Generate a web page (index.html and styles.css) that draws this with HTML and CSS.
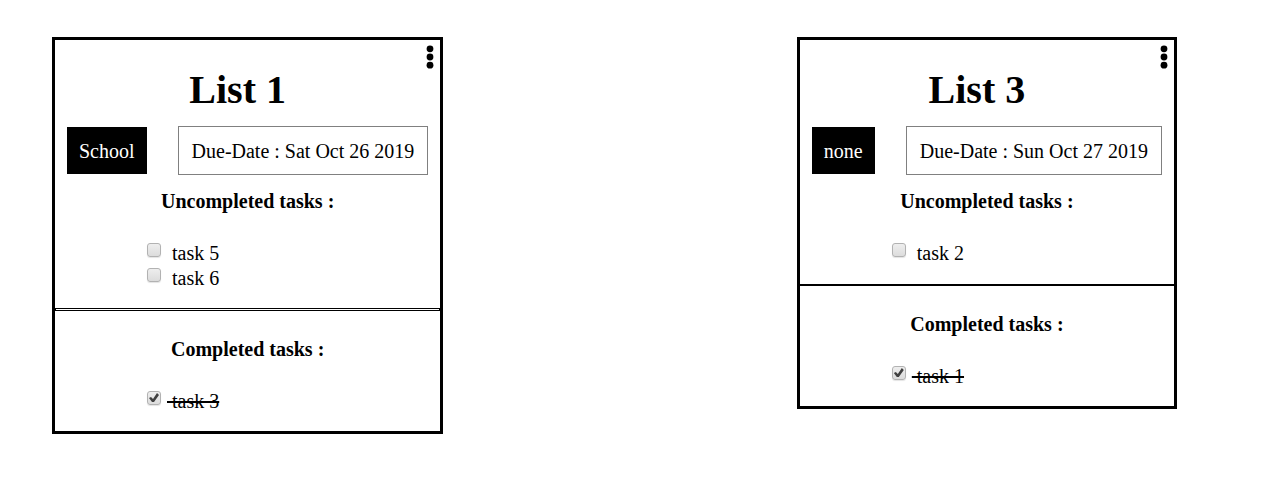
FILE: index.html
```html
<!DOCTYPE html>
<html lang="en">
<head>
<meta charset="utf-8">
<meta name="viewport" content="width=device-width, initial-scale=1">
<title>Lists</title>
<link rel="stylesheet" href="styles.css">
</head>
<body>
<main class="board">
  <article class="card">
    <header class="card-header">
      <h1 class="card-title">List 1</h1>
      <button class="menu" type="button" aria-label="List 1 options">
        <svg class="menu-icon" viewBox="0 0 8 24" aria-hidden="true"><circle cx="4" cy="3.8" r="3.4"/><circle cx="4" cy="12" r="3.4"/><circle cx="4" cy="20.2" r="3.4"/></svg>
      </button>
    </header>
    <div class="meta">
      <span class="tag">School</span>
      <span class="due">Due-Date : Sat Oct 26 2019</span>
    </div>
    <section class="tasks">
      <h2 class="tasks-title">Uncompleted tasks :</h2>
      <ul class="task-list">
        <li class="task"><input class="check" type="checkbox" id="task5"><label class="label" for="task5"> task 5</label></li>
        <li class="task"><input class="check" type="checkbox" id="task6"><label class="label" for="task6"> task 6</label></li>
      </ul>
    </section>
    <hr class="divider">
    <section class="tasks tasks-done">
      <h2 class="tasks-title">Completed tasks :</h2>
      <ul class="task-list">
        <li class="task"><input class="check" type="checkbox" id="task3" checked><label class="label" for="task3"> task 3</label></li>
      </ul>
    </section>
  </article>

  <article class="card">
    <header class="card-header">
      <h1 class="card-title">List 3</h1>
      <button class="menu" type="button" aria-label="List 3 options">
        <svg class="menu-icon" viewBox="0 0 8 24" aria-hidden="true"><circle cx="4" cy="3.8" r="3.4"/><circle cx="4" cy="12" r="3.4"/><circle cx="4" cy="20.2" r="3.4"/></svg>
      </button>
    </header>
    <div class="meta">
      <span class="tag">none</span>
      <span class="due">Due-Date : Sun Oct 27 2019</span>
    </div>
    <section class="tasks">
      <h2 class="tasks-title">Uncompleted tasks :</h2>
      <ul class="task-list">
        <li class="task"><input class="check" type="checkbox" id="task2"><label class="label" for="task2"> task 2</label></li>
      </ul>
    </section>
    <hr class="divider divider-solid">
    <section class="tasks tasks-done">
      <h2 class="tasks-title">Completed tasks :</h2>
      <ul class="task-list">
        <li class="task"><input class="check" type="checkbox" id="task1" checked><label class="label" for="task1"> task 1</label></li>
      </ul>
    </section>
  </article>
</main>
</body>
</html>
```

FILE: styles.css
```css
* {
  box-sizing: border-box;
}

body {
  margin: 0;
  background: #fff;
  color: #000;
  font-family: "Liberation Serif", "Times New Roman", serif;
  font-size: 20px;
  line-height: 23px;
}

.board {
  display: flex;
  flex-wrap: wrap;
  justify-content: space-between;
  align-items: flex-start;
  gap: 37px;
  padding: 37px 94px 37px 52px;
}

.card {
  border: 3px solid #000;
}

.card-header {
  display: flex;
  align-items: flex-start;
}

.card-title {
  flex: 1;
  margin: 0;
  padding: 27px 0 13px;
  font-size: 40px;
  line-height: 46px;
  text-align: center;
}

.menu {
  display: flex;
  justify-content: center;
  width: 20px;
  margin: 0;
  padding: 5px 0;
  border: 0;
  background: none;
  cursor: pointer;
}

.menu-icon {
  width: 8px;
  height: 24px;
  fill: #000;
}

.meta {
  display: flex;
  align-items: center;
  justify-content: space-between;
  gap: 31px;
  padding: 0 12px;
}

.tag {
  padding: 13px 12px 11px;
  background: #000;
  color: #fff;
}

.due {
  padding: 13px 13px 11px;
  border: 1px solid #808080;
}

.tasks {
  padding: 15px 0 17px;
}

.tasks-done {
  padding-top: 27px;
}

.tasks-title {
  margin: 0 0 28px;
  font-size: 20px;
  line-height: 23px;
  text-align: center;
}

.task-list {
  margin: 0;
  padding: 0 0 0 92px;
  list-style: none;
}

.task {
  display: flex;
  align-items: flex-start;
  gap: 6px;
  line-height: 25px;
}

.check {
  appearance: none;
  width: 14px;
  height: 14px;
  margin: 2px 0 0;
  border: 1px solid #b2b2b2;
  border-radius: 3px;
  background: linear-gradient(#eee, #dcdcdc);
  box-shadow: 0 1px 1px #e4e4e4;
}

.check:checked::before {
  content: "";
  display: block;
  width: 12px;
  height: 12px;
  background: #404040;
  clip-path: polygon(1px 6px, 3px 5px, 5px 7px, 9px 1px, 11px 3px, 6px 10px, 4px 10px);
}

.label {
  white-space: pre;
}

.check:checked + .label {
  text-decoration: line-through;
  text-decoration-thickness: 2px;
}

.divider {
  height: 3px;
  margin: 0;
  border: 1px solid #000;
}

.divider-solid {
  border-width: 1px 0 2px;
  border-top-color: transparent;
}
```
